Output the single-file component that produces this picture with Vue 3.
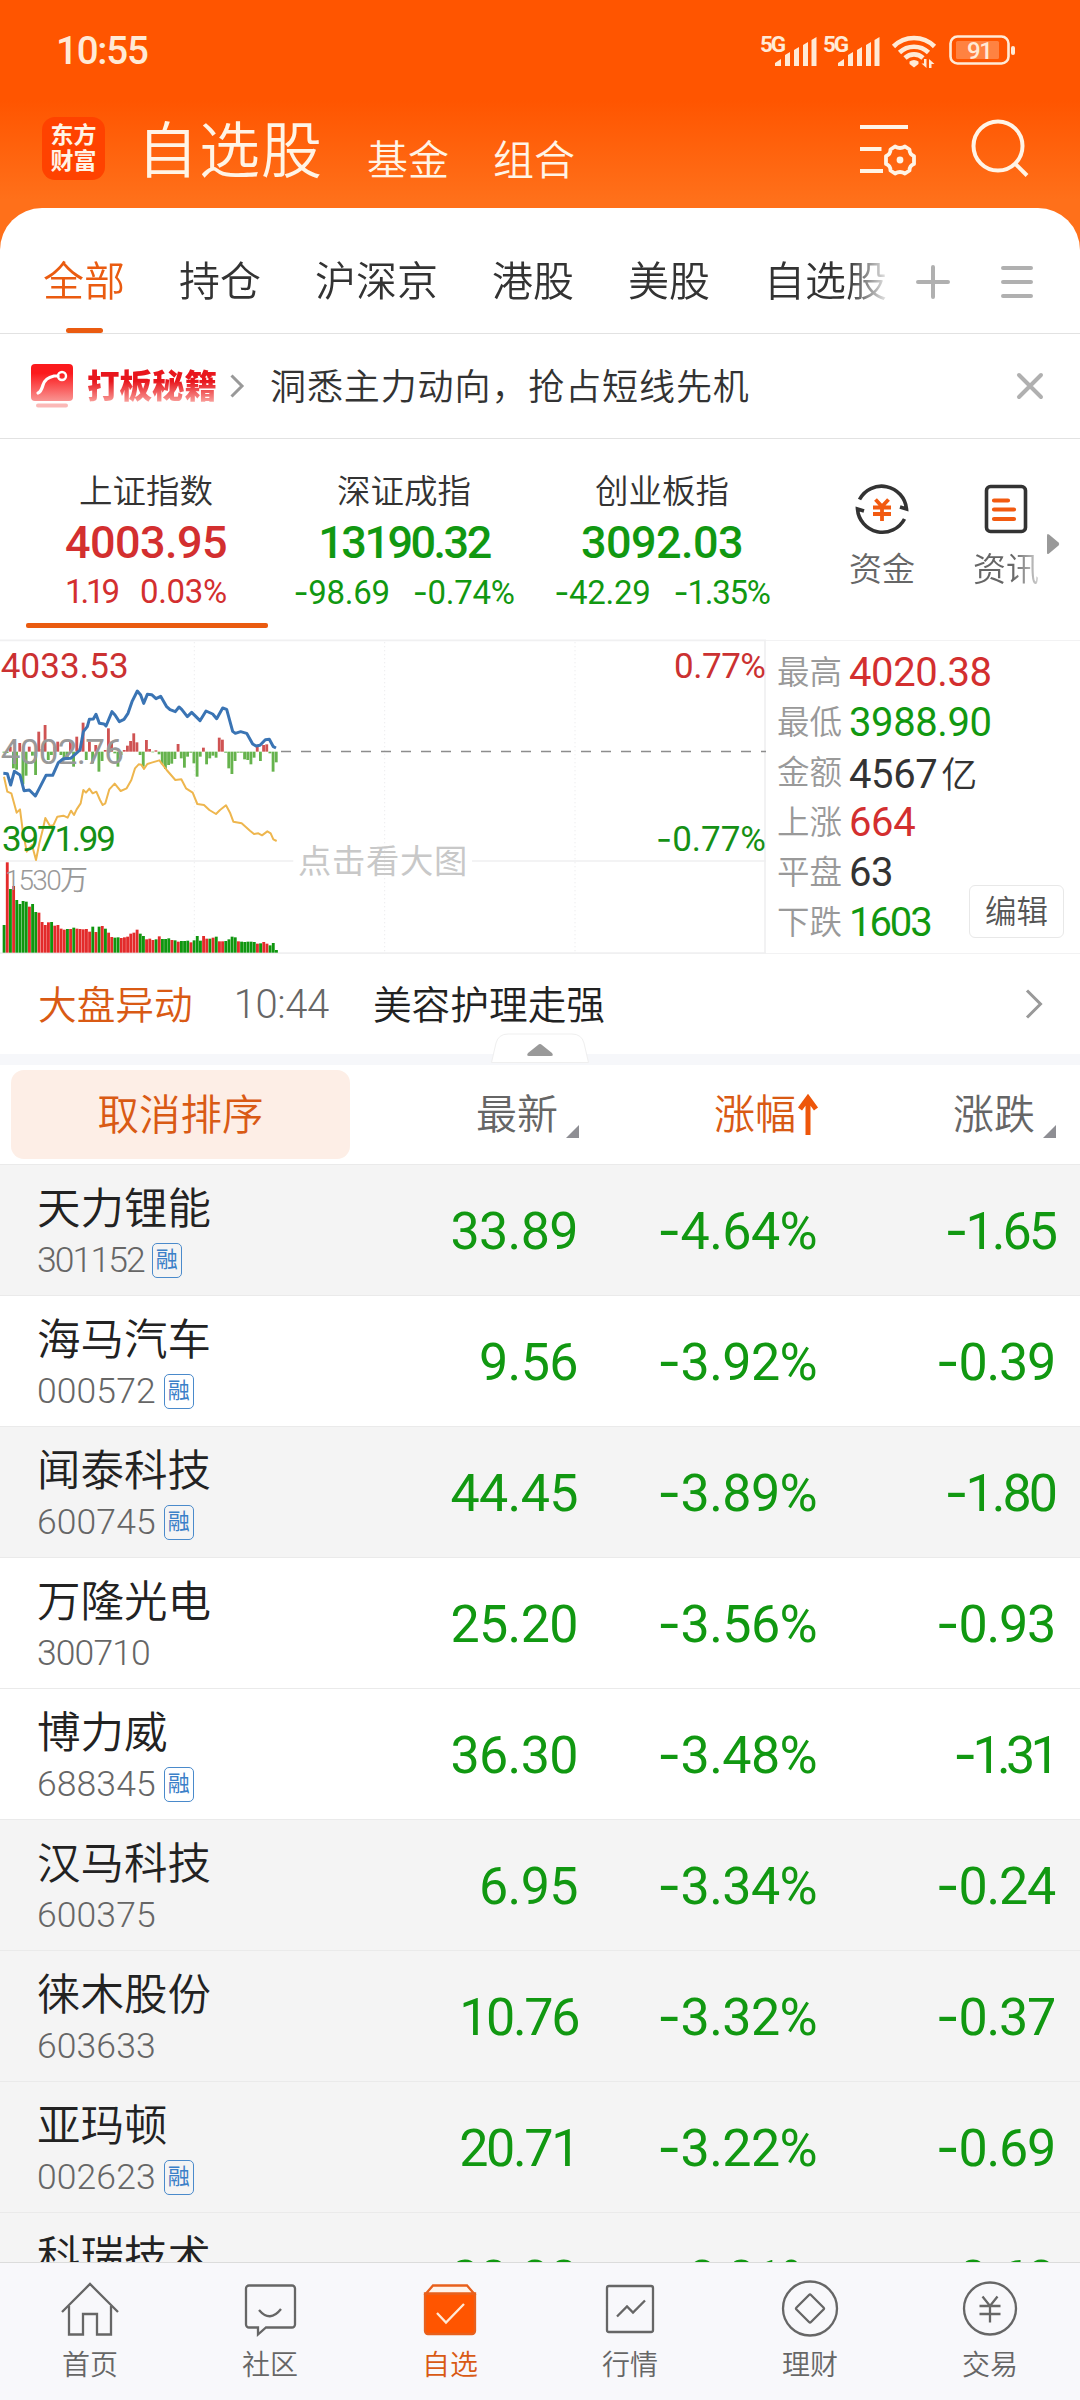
<template>
  <div class="app">
    <header class="top">
      <div class="status-bar">
        <span class="clock">10:55</span>
        <div class="status-icons">
          <svg v-for="n in 2" :key="n" class="signal" viewBox="0 0 58 34" width="58" height="34">
            <text x="0" y="17.500" class="signal-text" textLength="26">5G</text>
            <path d="M15 32v-3l6-4v7zM25 32V21l5-3v14zM34 32V16l5-3v19zM43 32V11l5-3v24zM51.500 32V6l5-3v29z" />
          </svg>
          <svg class="wifi" viewBox="0 0 44 34" width="44" height="34">
            <g fill="none" stroke="currentColor" stroke-width="4.600">
              <path d="M1.500 12.500a29 29 0 0 1 41 0" />
              <path d="M7.500 18.500a21 21 0 0 1 29 0" />
              <path d="M13 24a13 13 0 0 1 18 0" />
            </g>
            <path d="M17.500 27.500q4.500-3 9 0v2.500l-4.500 3.500-4.500-3.500z" />
            <path d="M32 25h2.500v9l-5-4.500h2.500zM37 34v-9l5.500 5H39.500v4z" />
          </svg>
          <svg class="battery" viewBox="0 0 68 32" width="68" height="32">
            <rect x="1.500" y="2.500" width="58" height="27" rx="7" fill="none" stroke="currentColor" stroke-width="2.600" />
            <rect x="7" y="7" width="43" height="18" rx="1.500" opacity="0.3" />
            <rect x="62" y="12" width="4" height="9" rx="2" />
            <text x="18" y="25" class="battery-text">91</text>
          </svg>
        </div>
      </div>
      <div class="title-bar">
        <div class="logo"><span>东方</span><span>财富</span></div>
        <h1>自选股</h1>
        <span class="sub-title">基金</span>
        <span class="sub-title">组合</span>
        <svg class="manage" viewBox="0 0 58 56" width="58" height="56" fill="none" stroke="currentColor" stroke-width="4">
          <path d="M1 8h48M1 30h21.500M1 52h23" />
          <path
            stroke-linejoin="round"
            stroke-width="3.800"
            d="M36 27.500q5 3 10 0l4.500 3q0 5 4.500 6.500v8q-4.500 1.500-4.500 6.500l-4.500 3q-5-3-10 0l-4.500-3q0-5-4.500-6.500v-8q4.500-1.500 4.500-6.500z"
          />
          <circle cx="41" cy="41" r="3.400" fill="currentColor" stroke="none" />
        </svg>
        <svg class="search" viewBox="0 0 60 62" width="60" height="62" fill="none" stroke="currentColor" stroke-width="4">
          <circle cx="27" cy="28" r="24.500" />
          <path d="M43.500 45 56 57.500" />
        </svg>
      </div>
    </header>

    <main class="sheet">
      <nav class="tabs">
        <div class="tab-list">
          <span v-for="(tab, i) in tabs" :key="tab" class="tab" :class="{ active: i === 0 }">{{ tab }}</span>
        </div>
        <svg class="plus" viewBox="0 0 36 36" width="36" height="36"><path d="M3 18h30M18 3v30" /></svg>
        <svg class="menu" viewBox="0 0 36 36" width="36" height="36"><path d="M4 4h28M4 18h28M4 32h28" /></svg>
      </nav>

      <section class="banner">
        <svg class="banner-icon" viewBox="0 0 42 44" width="42" height="44">
          <defs>
            <linearGradient id="bannerFill" x1="0" y1="0" x2="0" y2="1">
              <stop offset="0.250" stop-color="#fb1a1d" />
              <stop offset="1" stop-color="#f99492" />
            </linearGradient>
          </defs>
          <rect width="42" height="37" rx="4" fill="url(#bannerFill)" />
          <path d="M7 29q3-1 5-8t11-9h4" fill="none" stroke="#fff" stroke-width="3.200" stroke-linecap="round" />
          <circle cx="31" cy="12" r="4" fill="none" stroke="#fff" stroke-width="2.400" />
          <rect x="5" y="39.500" width="32" height="4" rx="2" fill="#fbb9b7" />
        </svg>
        <span class="banner-tag">打板秘籍</span>
        <svg class="banner-arrow" viewBox="0 0 16 26" width="16" height="26"><path d="m2.500 2.500 10.500 10.500-10.500 10.500" /></svg>
        <span class="banner-text">洞悉主力动向，抢占短线先机</span>
        <svg class="close" viewBox="0 0 30 30" width="30" height="30"><path d="m4 4 22 22M26 4 4 26" /></svg>
      </section>

      <section class="indices">
        <div v-for="(item, i) in indices" :key="item.name" class="index" :class="[item.dir, { active: i === 0 }]">
          <span class="index-name">{{ item.name }}</span>
          <span class="index-value" :style="{ letterSpacing: tracking(item.value, 45) }">{{ item.value }}</span>
          <span class="index-change">
            <span v-for="v in [item.diff, item.pct]" :key="v" :style="{ letterSpacing: tracking(v, 33, -0.3) }">
              <i v-if="v[0] === '-'" class="sign">-</i>{{ v.replace('-', '') }}
            </span>
          </span>
        </div>
        <div class="tool">
          <svg viewBox="0 0 54 54" width="54" height="54" fill="none">
            <g stroke="#333" stroke-width="3.600">
              <path d="M4.500 17.500A25 25 0 0 1 51.500 27l-6.500-2" />
              <path d="M49.500 37A25 25 0 0 1 2.500 27l6.500 2" />
            </g>
            <path d="m20.500 17.500 6.500 7 6.500-7M18 25.500h18M18 32h18M27 24v15" stroke="#f25a10" stroke-width="3.800" />
          </svg>
          <span>资金</span>
        </div>
        <div class="tool fade">
          <svg viewBox="0 0 54 54" width="54" height="54" fill="none">
            <rect x="7.500" y="4.500" width="39" height="45" rx="4" stroke="#333" stroke-width="3.600" />
            <path d="M15 18.500h14M15 27.500h20M15 37h20" stroke="#f25a10" stroke-width="4.200" stroke-linecap="round" />
          </svg>
          <span>资讯</span>
        </div>
        <svg class="more" viewBox="0 0 14 22" width="14" height="22"><path d="M1 2.500Q1 0 3 1.500l9.500 8q1.500 1.500 0 3l-9.500 8Q1 22 1 19.500z" /></svg>
      </section>

      <section class="market">
        <svg class="chart" viewBox="0 30 2298 945" width="766" height="315">
          <g stroke="#ededee" stroke-width="3" stroke-dasharray="4 8">
            <path v-for="x in [583, 1154, 1725]" :key="x" :d="`M${x} 36V968`" />
          </g>
          <path d="M0 31H2298M0 693H880M1416 693H2298M0 969H2298M2295 30V969" class="frame" />
          <path d="M843 364.500H2298" class="mid" />
          <rect
            v-for="(v, i) in momentum"
            :key="'m' + i"
            :x="7.500 + i * 9.5"
            :y="v > 0 ? 365 - v : 365"
            width="8.500"
            :height="Math.abs(v)"
            :fill="v > 0 ? '#cf5353' : '#66b34d'"
          />
          <rect
            v-for="(v, i) in volumes"
            :key="'v' + i"
            :x="8 + i * 9.5"
            :y="v[0]"
            width="8.600"
            :height="968 - v[0]"
            :fill="v[1] ? '#e32b2b' : '#0f960f'"
          />
          <text x="2" y="402" textLength="370" fill="#999">4002.76</text>
          <text x="2" y="144" textLength="384" fill="#cb3131">4033.53</text>
          <text x="2298" y="144" text-anchor="end" textLength="276" fill="#cb3131">0.77%</text>
          <text x="2298" y="663" text-anchor="end" fill="#159015"><tspan class="sign">-</tspan>0.77%</text>
          <text x="14" y="779" textLength="250" class="vol-label" fill="#999">1530万</text>
          <text x="894" y="730" textLength="508" class="hint" fill="#c8c8c8">点击看大图</text>
          <polyline :points="avgLine" class="avg" />
          <polyline :points="priceLine" class="price" />
          <text x="6" y="663" textLength="342" fill="#159015">3971.99</text>
        </svg>
        <div class="stats">
          <div v-for="s in stats" :key="s.label" class="stat">
            <span class="stat-label">{{ s.label }}</span>
            <span class="stat-value" :class="s.dir" :style="{ letterSpacing: tracking(s.value, 40, -0.4) }">
              {{ s.value }}<em v-if="s.unit">{{ s.unit }}</em>
            </span>
          </div>
          <button class="edit">编辑</button>
        </div>
      </section>

      <section class="news">
        <span class="news-tag">大盘异动</span>
        <span class="news-time">10:44</span>
        <span class="news-text">美容护理走强</span>
        <svg viewBox="0 0 20 32" width="20" height="32"><path d="m3 2.500 13.500 13.500L3 29.500" /></svg>
      </section>

      <div class="divider">
        <svg viewBox="0 0 98 31" width="98" height="31">
          <path d="M.5 29.500 5 10Q7.500 1 17 1h64q9.500 0 12 9l4.500 19.500z" fill="#fff" stroke="#efefef" />
          <path d="M49 11q1 0 2 1l10 8q2 3-1 3H38q-3 0-1-3l10-8q1-1 2-1z" fill="#999" />
        </svg>
      </div>

      <section class="list-head">
        <button class="cancel-sort">取消排序</button>
        <span class="head-cell price-col">最新<b class="corner"></b></span>
        <span class="head-cell pct-col sorted">
          涨幅
          <svg viewBox="0 0 20 42" width="20" height="42"><path d="M10 41V4M2 15l8-11 8 11" /></svg>
        </span>
        <span class="head-cell diff-col">涨跌<b class="corner"></b></span>
      </section>

      <section class="list">
        <div v-for="s in stocks" :key="s.code" class="row" :class="{ shaded: s.shaded }">
          <div class="stock">
            <span class="stock-name">{{ s.name }}</span>
            <span class="stock-code">
              <span :style="{ letterSpacing: tracking(s.code, 35, 0.1) }">{{ s.code }}</span>
              <b v-if="s.margin" class="badge">融</b>
            </span>
          </div>
          <span class="num price-col" :style="{ letterSpacing: tracking(s.price, 52) }">{{ s.price }}</span>
          <span class="num pct-col" :style="{ letterSpacing: tracking(s.pct, 52) }">
            <i class="sign">-</i>{{ s.pct.slice(1) }}
          </span>
          <span class="num diff-col" :style="{ letterSpacing: tracking(s.diff, 52, -1.2) }">
            <i class="sign">-</i>{{ s.diff.slice(1) }}
          </span>
        </div>
      </section>
    </main>

    <footer class="bottom-nav">
      <div v-for="item in navItems" :key="item.label" class="nav-item" :class="{ active: item.active }">
        <svg viewBox="0 0 60 60" width="60" height="60">
          <path v-if="item.solid" :d="item.solid" class="solid" />
          <path :d="item.path" :class="{ check: item.active }" />
          <path v-if="item.lid" :d="item.lid" class="lid" />
        </svg>
        <span>{{ item.label }}</span>
      </div>
    </footer>
  </div>
</template>

<script setup>
const tabs = ['全部', '持仓', '沪深京', '港股', '美股', '自选股']

const indices = [
  { name: '上证指数', value: '4003.95', diff: '1.19', pct: '0.03%', dir: 'up' },
  { name: '深证成指', value: '13190.32', diff: '-98.69', pct: '-0.74%', dir: 'down' },
  { name: '创业板指', value: '3092.03', diff: '-42.29', pct: '-1.35%', dir: 'down' }
]

const stats = [
  { label: '最高', value: '4020.38', dir: 'up' },
  { label: '最低', value: '3988.90', dir: 'down' },
  { label: '金额', value: '4567', unit: '亿' },
  { label: '上涨', value: '664', dir: 'up' },
  { label: '平盘', value: '63' },
  { label: '下跌', value: '1603', dir: 'down' }
]

const stocks = [
  { name: '天力锂能', code: '301152', margin: true, price: '33.89', pct: '-4.64%', diff: '-1.65', shaded: true },
  { name: '海马汽车', code: '000572', margin: true, price: '9.56', pct: '-3.92%', diff: '-0.39' },
  { name: '闻泰科技', code: '600745', margin: true, price: '44.45', pct: '-3.89%', diff: '-1.80', shaded: true },
  { name: '万隆光电', code: '300710', price: '25.20', pct: '-3.56%', diff: '-0.93' },
  { name: '博力威', code: '688345', margin: true, price: '36.30', pct: '-3.48%', diff: '-1.31' },
  { name: '汉马科技', code: '600375', price: '6.95', pct: '-3.34%', diff: '-0.24', shaded: true },
  { name: '徕木股份', code: '603633', price: '10.76', pct: '-3.32%', diff: '-0.37', shaded: true },
  { name: '亚玛顿', code: '002623', margin: true, price: '20.71', pct: '-3.22%', diff: '-0.69', shaded: true },
  { name: '科瑞技术', code: '002957', price: '20.30', pct: '-3.01%', diff: '-0.63', shaded: true }
]

// tighten strings with many 1s so they do not look loose
function tracking(text, size, base = -0.6) {
  const ones = (text.match(/1/g) || []).length
  return base - (ones * 0.17 * size) / text.length + 'px'
}

const priceLine =
  '10,430 22,431 32,465 43,424 60,435 72,482 88,480 106,498 118,475 138,436 158,436 175,398 190,386 212,385 240,360 250,305 262,290 268,268 280,267 288,253 298,280 312,282 318,288 336,245 345,255 358,275 372,268 384,250 396,215 412,183 422,195 431,220 442,193 455,194 468,206 482,199 500,230 510,239 526,245 537,231 545,238 562,260 575,247 600,272 618,243 638,252 650,266 668,234 680,238 698,304 706,310 722,305 740,310 758,342 768,348 780,346 796,329 808,328 820,350 828,354'

const avgLine =
  '12,440 22,485 34,490 50,548 60,538 68,600 80,665 96,645 108,690 118,640 128,600 136,564 150,588 160,586 172,560 190,557 203,563 213,542 222,555 230,538 242,520 250,480 258,488 268,476 278,490 289,485 300,510 308,525 316,520 328,478 344,461 362,483 380,475 394,450 405,415 416,403 424,404 432,417 442,402 455,398 478,391 500,420 526,450 544,448 558,475 578,488 592,522 612,525 628,540 648,552 660,540 678,526 690,548 700,575 725,580 750,602 762,612 775,610 786,616 802,604 812,610 820,628 830,633'

const momentum = [
  -3, -4, 15, -50, -54, 26, -98, -72, 15, -12, -70, 60, 8, 80, -25, -10, 15, 30, -10, -20, -25, 30, -45, 45, 10, 87,
  -25, 30, -35, 20, -60, -28, 5, 70, 30, -5, -45, -10, 5, 18, 32, 55, 28, -10, -45, 35, 8, -2, 4, -8, -38, -52, -40,
  -36, -22, 23, -20, -48, -15, -3, -35, -75, -15, 12, -38, -20, -12, -18, 42, 36, -3, -50, -67, -28, -3, -3, -23, -25,
  -38, -18, 15, -28, 20, 22, -5, -60, -32
]

const volumeTops = [
  885, 697, 777, 768, 810, 822, 813, 815, 830, 822, 846, 848, 876, 885, 877, 876, 887, 885, 896, 899, 897, 897, 893,
  896, 897, 898, 897, 905, 890, 906, 890, 888, 896, 908, 921, 923, 922, 924, 922, 920, 911, 908, 899, 911, 918, 928,
  926, 930, 928, 919, 927, 927, 925, 930, 931, 935, 933, 933, 932, 937, 931, 918, 932, 918, 926, 926, 923, 920, 934,
  934, 933, 928, 920, 922, 934, 935, 936, 935, 935, 936, 941, 940, 936, 941, 946, 939, 960
]
const volumeRise = '010100001001111011110101111101010110011111100111010001010001000110101100001000001011000'
const volumes = volumeTops.map((top, i) => [top, volumeRise[i] === '1'])

const navItems = [
  { label: '首页', path: 'M2 33 30 5l28 28M9 27v28.500h14V35h14v20.500h14V27' },
  { label: '社区', path: 'M9 6.500h43a3 3 0 0 1 3 3v36a3 3 0 0 1-3 3H26l-8 7v-7H9a3 3 0 0 1-3-3v-36a3 3 0 0 1 3-3zM19 31q11 13 22-1' },
  {
    label: '自选',
    active: true,
    solid: 'M5 14.500h50V52a3 3 0 0 1-3 3H8a3 3 0 0 1-3-3z',
    path: 'm17 34 9 9.500L44 25',
    lid: 'M6 14.500 13 6.500h34l7 8z'
  },
  { label: '行情', path: 'M9 7h42a2 2 0 0 1 2 2v42a2 2 0 0 1-2 2H9a2 2 0 0 1-2-2V9a2 2 0 0 1 2-2zM17 37.500l10-10 6 6L45 21.500' },
  { label: '理财', path: 'M30 2.500a27 27 0 1 1 0 54 27 27 0 0 1 0-54zM29 16q1-1 2 0l12.500 12.500q1 1 0 2L31 43q-1 1-2 0L16.500 30.500q-1-1 0-2z' },
  { label: '交易', path: 'M30 3.500a26 26 0 1 1 0 52 26 26 0 0 1 0-52zM22.500 17.500 30 27l7.500-9.500M19.500 27h21M19.500 35h21M30 27v16.500' }
]
</script>

<style>
body {
  background: #fff;
}
</style>

<style scoped>
.app {
  width: 1080px;
  height: 2400px;
  display: flex;
  flex-direction: column;
  overflow: hidden;
  font-family: Roboto, 'Noto Sans CJK SC', sans-serif;
  font-weight: 350;
  color: #333;
  background: linear-gradient(#ff5500 100px, #ff701a 200px, #ff701a 260px);
}

.app svg {
  flex-shrink: 0;
  display: block;
  overflow: visible;
}

.up {
  color: #d32f2f;
}

.down {
  color: #119811;
}

/* Roboto's hyphen is short and sits low */
.sign {
  font-family: Inter, Roboto, sans-serif;
  font-style: normal;
}

.top {
  height: 208px;
  flex-shrink: 0;
  color: #fff4e6;
}

.status-bar {
  height: 100px;
  display: flex;
  align-items: center;
  justify-content: space-between;
  padding: 1px 63px 0 56px;
  box-sizing: border-box;
  color: #ffead6;
}

.clock {
  font-size: 38.500px;
  font-weight: 500;
  letter-spacing: -1.2px;
}

.status-icons {
  display: flex;
  align-items: center;
}

.status-icons svg {
  fill: currentColor;
}

.signal {
  margin-right: 5px;
}

.wifi {
  margin: 0 13px 0 6px;
}

.battery {
  margin-bottom: 1px;
}

.signal-text {
  font-size: 22.500px;
  font-weight: 700;
}

.battery-text {
  font-size: 24px;
  font-weight: 500;
  letter-spacing: -1.500px;
}

.title-bar {
  height: 108px;
  display: flex;
  padding-left: 42px;
}

.logo {
  width: 63px;
  height: 63px;
  margin-top: 17px;
  border-radius: 13px;
  background: #ff4200;
  display: flex;
  flex-direction: column;
  align-items: center;
  justify-content: center;
  font-size: 23px;
  line-height: 26px;
  font-weight: 700;
}

h1 {
  margin: 9px 0 0 32px;
  font-size: 61px;
  line-height: 86px;
  font-weight: 350;
  letter-spacing: 1px;
}

.sub-title {
  margin: 33px 0 0 44px;
  font-size: 41px;
  line-height: 56px;
}

.manage {
  margin: 19px 0 0 auto;
}

.search {
  margin: 18px 49px 0 54px;
}

.sheet {
  flex: 1;
  min-height: 0;
  background: #fff;
  border-radius: 42px 42px 0 0;
  overflow: hidden;
}

.tabs {
  height: 125px;
  display: flex;
  align-items: center;
  border-bottom: 1px solid #e2e2e2;
}

.tab-list {
  width: 850px;
  height: 125px;
  padding-left: 43px;
  display: flex;
  gap: 54px;
  overflow: hidden;
  white-space: nowrap;
  -webkit-mask-image: linear-gradient(90deg, #000 848px, transparent 892px);
  mask-image: linear-gradient(90deg, #000 848px, transparent 892px);
}

.tab {
  position: relative;
  font-size: 41px;
  line-height: 149px;
}

.tab.active {
  color: #ea5b10;
}

.tab.active::after {
  content: '';
  position: absolute;
  left: 23px;
  bottom: 0;
  width: 37px;
  height: 5px;
  border-radius: 3px;
  background: #ea5b10;
}

.plus,
.menu,
.close {
  fill: none;
  stroke: #b0b0b0;
  stroke-width: 4;
  stroke-linecap: round;
}

.plus {
  margin: 22px 0 0 22px;
}

.menu {
  margin: 22px 0 0 48px;
}

.banner {
  height: 104px;
  display: flex;
  align-items: center;
  padding: 0 35px 0 31px;
  border-bottom: 1px solid #e2e2e2;
}

.banner-tag {
  margin: 0 0 5px 14px;
  font-size: 32.500px;
  font-weight: 900;
  background: linear-gradient(#e8161d 45%, #f9a09c 90%);
  -webkit-background-clip: text;
  background-clip: text;
  color: transparent;
}

.banner-arrow {
  margin-left: 12px;
  fill: none;
  stroke: #999;
  stroke-width: 3;
}

.banner-text {
  margin: 0 0 4px 25px;
  font-size: 36px;
  letter-spacing: 0.9px;
}

.close {
  margin-left: auto;
}

.indices {
  height: 201px;
  display: flex;
  padding-left: 17px;
}

.index {
  position: relative;
  width: 258px;
  padding-top: 28px;
  display: flex;
  flex-direction: column;
  align-items: center;
}

.index.active::after {
  content: '';
  position: absolute;
  left: 9px;
  bottom: 12px;
  width: 242px;
  height: 5px;
  border-radius: 2px;
  background: #ea5b10;
}

.index-name {
  color: #333;
  font-size: 33.500px;
  line-height: 49px;
}

.index-value {
  font-size: 45px;
  font-weight: 500;
  line-height: 54px;
}

.index-change {
  display: flex;
  gap: 23px;
  font-size: 33px;
  font-weight: 400;
  line-height: 44px;
  white-space: nowrap;
}

.tool {
  width: 66px;
  margin-left: 58px;
  padding-top: 43px;
  display: flex;
  flex-direction: column;
  align-items: center;
  gap: 10px;
  color: #666;
  font-size: 33px;
  line-height: 48px;
}

.tool.fade span {
  -webkit-mask-image: linear-gradient(90deg, #000 60%, rgba(0, 0, 0, 0.3));
  mask-image: linear-gradient(90deg, #000 60%, rgba(0, 0, 0, 0.3));
}

.more {
  margin: 94px 0 0 7px;
  fill: #999;
}

.market {
  height: 314px;
  display: flex;
  border-bottom: 1px solid #f2f2f3;
  box-sizing: border-box;
}

.chart {
  font-size: 105px;
  font-weight: 400;
}

.frame {
  fill: none;
  stroke: #f0f0f1;
  stroke-width: 5;
}

.mid {
  stroke: #8d8d8d;
  stroke-width: 5;
  stroke-dasharray: 30 30;
}

.vol-label {
  font-size: 84px;
  font-weight: 350;
}

.hint {
  font-size: 100px;
  font-weight: 400;
}

.avg {
  fill: none;
  stroke: #eeb64e;
  stroke-width: 6;
  stroke-linejoin: round;
}

.price {
  fill: none;
  stroke: #3a74b4;
  stroke-width: 9;
  stroke-linejoin: round;
}

.stats {
  position: relative;
  flex: 1;
  padding: 6px 0 0 11px;
  border-top: 1px solid #f2f2f3;
}

.stat {
  height: 50px;
  display: flex;
  align-items: center;
}

.stat-label {
  width: 72px;
  padding-bottom: 5px;
  color: #999;
  font-size: 32.500px;
}

.stat-value {
  font-size: 40px;
  font-weight: 400;
}

.stat-value em {
  margin-left: 4px;
  font-size: 36px;
  font-style: normal;
  font-weight: 350;
}

.edit {
  position: absolute;
  right: 16px;
  bottom: 15px;
  width: 95px;
  height: 53px;
  padding: 0 0 5px;
  border: 1px solid #e8e8e8;
  border-radius: 6px;
  background: #fff;
  color: #555;
  font: inherit;
  font-size: 31.500px;
}

.news {
  height: 100px;
  display: flex;
  align-items: center;
  padding: 0 36px 0 38px;
  font-size: 38.700px;
}

.news-tag {
  padding-bottom: 5px;
  color: #d95a14;
}

.news-time {
  margin-left: 41px;
  font-size: 40px;
  color: #666;
  letter-spacing: -0.4px;
}

.news-text {
  margin-left: 44px;
  padding-bottom: 5px;
  color: #222;
}

.news svg {
  margin-left: auto;
  fill: none;
  stroke: #999;
  stroke-width: 3;
}

.divider {
  position: relative;
  height: 11px;
  background: #f6f7fa;
}

.divider svg {
  position: absolute;
  left: 491px;
  bottom: 1px;
}

.list-head {
  height: 99px;
  display: flex;
  align-items: center;
  font-size: 41px;
  color: #666;
}

.cancel-sort {
  width: 339px;
  height: 89px;
  margin-left: 11px;
  padding: 0 0 6px;
  border: 0;
  border-radius: 13px;
  background: #fdeee6;
  color: #d95a14;
  font: inherit;
  font-size: 41.500px;
}

.head-cell {
  position: relative;
  display: flex;
  align-items: center;
  justify-content: flex-end;
  box-sizing: border-box;
  line-height: 60px;
}

.price-col {
  width: 229px;
}

.pct-col {
  width: 239px;
}

.diff-col {
  width: 238px;
}

.head-cell:has(.corner) {
  padding-right: 21px;
}

.corner {
  position: absolute;
  right: 0;
  bottom: 7px;
  border-left: 13px solid transparent;
  border-bottom: 13px solid #8e8e93;
}

.sorted {
  color: #d95a14;
}

.sorted svg {
  margin-left: 2px;
  fill: none;
  stroke: #ee560a;
  stroke-width: 5;
}

.row {
  height: 131px;
  display: flex;
  align-items: center;
  box-sizing: border-box;
  border-top: 1px solid #eaeaea;
  background: #fff;
}

.row.shaded {
  background: #f4f4f4;
}

.stock {
  width: 312px;
  padding-left: 37px;
  display: flex;
  flex-direction: column;
}

.stock-name {
  margin-top: 2px;
  color: #222;
  font-size: 43.500px;
  line-height: 58px;
}

.stock-code {
  display: flex;
  align-items: center;
  height: 43px;
  color: #666;
  font-size: 35.500px;
}

.badge {
  width: 28px;
  height: 33px;
  margin-left: 8px;
  border: 1px solid #4a8acb;
  border-radius: 5px;
  color: #3b80c8;
  font-size: 22px;
  line-height: 32px;
  font-weight: 400;
  text-align: center;
}

.num {
  padding-top: 3px;
  color: #119811;
  font-size: 52px;
  font-weight: 400;
  line-height: 60px;
  text-align: right;
  white-space: nowrap;
}

.bottom-nav {
  height: 138px;
  flex-shrink: 0;
  box-sizing: border-box;
  display: flex;
  border-top: 1px solid #dcdcdc;
  background: #f8f8fb;
}

.nav-item {
  flex: 1;
  padding-top: 16px;
  display: flex;
  flex-direction: column;
  align-items: center;
  gap: 5px;
  color: #666;
  font-size: 28px;
  line-height: 44px;
}

.nav-item svg {
  fill: none;
  stroke: #666;
  stroke-width: 2.300;
}

.nav-item.active {
  color: #d95a14;
}

.nav-item.active svg {
  stroke: #e8601c;
}

.nav-item .solid {
  fill: #ff5500;
}

.nav-item .lid {
  fill: #fff3ea;
}

.nav-item .check {
  stroke: #ffe9d6;
}
</style>
